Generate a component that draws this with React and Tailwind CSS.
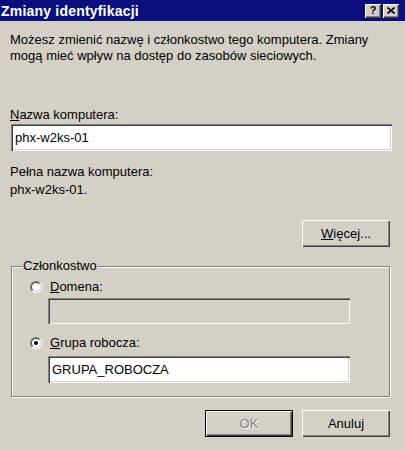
const raised =
  'shadow-[inset_1px_1px_0_#ffffff,inset_-1px_-1px_0_#404040,inset_-2px_-2px_0_#808080]'
const sunken =
  'shadow-[inset_1px_1px_0_#808080,inset_2px_2px_0_#404040,inset_-1px_-1px_0_#ffffff,inset_-2px_-2px_0_#d4d0c8]'

const Radio = ({ checked }) => (
  <div className="w-[12px] h-[12px] rounded-full border border-t-[#808080] border-l-[#808080] border-b-white border-r-white">
    <div className="w-full h-full rounded-full border border-t-[#404040] border-l-[#404040] border-b-[#d4d0c8] border-r-[#d4d0c8] bg-white flex items-center justify-center">
      {checked && <div className="w-[4px] h-[4px] rounded-full bg-black" />}
    </div>
  </div>
)

const TextBox = ({ value, disabled, className }) => (
  <div
    className={`${sunken} ${disabled ? 'bg-[#d4d0c8]' : 'bg-white'} flex items-center pl-[4px] ${className}`}
  >
    {value}
  </div>
)

const App = () => {
  return (
    <div className="w-[405px] h-[450px] overflow-hidden bg-[#d4d0c8] text-black text-[13px] font-['Liberation_Sans',Arial,sans-serif]">
      {/* title bar */}
      <div className="h-[21px] bg-[#0a0f7d] flex items-center justify-between pl-[1px] pr-[6px]">
        <span className="text-white font-bold text-[14px] tracking-[0.2px] leading-none">Zmiany identyfikacji</span>
        <div className="flex gap-[2px]">
          <div className={`w-[16px] h-[14px] bg-[#d4d0c8] ${raised} flex items-center justify-center text-[11px] font-bold leading-none`}>
            ?
          </div>
          <div className={`w-[16px] h-[14px] bg-[#d4d0c8] ${raised} flex items-center justify-center`}>
            <svg width="8" height="7" viewBox="0 0 8 7">
              <path d="M0.5 0.5 L7.5 6.5 M7.5 0.5 L0.5 6.5" stroke="#000" strokeWidth="1.6" />
            </svg>
          </div>
        </div>
      </div>

      <div className="flex flex-col pl-[11px] pr-[13px]">
        <p className="pt-[11px] leading-[16px] -ml-[1px]">
          Możesz zmienić nazwę i członkostwo tego komputera. Zmiany
          <br />
          mogą mieć wpływ na dostęp do zasobów sieciowych.
        </p>

        <div className="mt-[43px] leading-[16px] -ml-[1px]">
          <span className="underline">N</span>azwa komputera:
        </div>
        <TextBox value="phx-w2ks-01" className="mt-[1px] h-[27px]" />

        <div className="mt-[12px] leading-[18px] -ml-[1px]">
          Pełna nazwa komputera:
          <br />
          phx-w2ks-01.
        </div>

        <button className={`self-end mr-[2px] mt-[21px] w-[88px] h-[27px] bg-[#d4d0c8] ${raised}`}>
          <span className="underline">W</span>ięcej...
        </button>

        <div className="relative mt-[19px] mr-[2px] h-[131px] border border-[#808080] shadow-[1px_1px_0_#ffffff,inset_1px_1px_0_#ffffff] pl-[18px] pt-[12px]">
          <span className="absolute left-[10px] -top-[9px] px-[1px] bg-[#d4d0c8] leading-[16px]">Członkostwo</span>

          <div className="flex items-center gap-[8px] leading-[16px]">
            <Radio />
            <span>
              <span className="underline">D</span>omena:
            </span>
          </div>
          <TextBox disabled value="" className="ml-[18px] mt-[3px] w-[302px] h-[26px]" />

          <div className="flex items-center gap-[8px] leading-[16px] mt-[11px]">
            <Radio checked />
            <span>
              <span className="underline">G</span>rupa robocza:
            </span>
          </div>
          <TextBox value="GRUPA_ROBOCZA" className="ml-[18px] mt-[5px] w-[302px] h-[27px]" />
        </div>

        <div className="flex justify-end gap-[9px] mr-[2px] mt-[13px]">
          <button className="w-[88px] h-[27px] bg-[#d4d0c8] border border-black shadow-[inset_1px_1px_0_#ffffff,inset_-1px_-1px_0_#404040,inset_-2px_-2px_0_#808080] text-[#808080] [text-shadow:1px_1px_0_#ffffff]">
            OK
          </button>
          <button className={`w-[88px] h-[27px] bg-[#d4d0c8] ${raised}`}>Anuluj</button>
        </div>
      </div>
    </div>
  )
}

export default App
